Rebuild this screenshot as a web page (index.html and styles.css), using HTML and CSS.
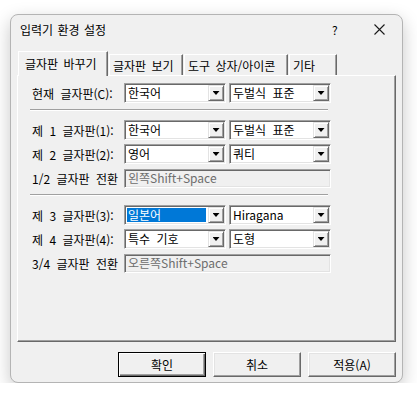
FILE: index.html
```html
<!DOCTYPE html>
<html lang="ko">
<head>
    <meta charset="UTF-8">
    <meta name="viewport" content="width=device-width, initial-scale=1.0">
    <title>입력기 환경 설정</title>
    <link rel="stylesheet" href="styles.css">
</head>
<body>

<div class="window">
    <div class="titlebar">
        <span class="title">입력기 환경 설정</span>
        <span class="help">?</span>
        <span class="close">
            <svg width="11" height="11" viewBox="0 0 11 11"><path d="M0.5 0.5 L10.5 10.5 M10.5 0.5 L0.5 10.5" stroke="#1a1a1a" stroke-width="1.1" fill="none"/></svg>
        </span>
    </div>

    <div class="tabs">
        <div class="tab tab-switch active">글자판 바꾸기</div>
        <div class="tab tab-view">글자판 보기</div>
        <div class="tab tab-tools">도구 상자/아이콘</div>
        <div class="tab tab-etc">기타</div>
    </div>

    <div class="panel">
        <div class="row">
            <span class="label">현재 글자판(C):</span>
            <div class="combo"><span class="value">한국어</span><span class="drop"><i></i></span></div>
            <div class="combo"><span class="value">두벌식 표준</span><span class="drop"><i></i></span></div>
        </div>

        <div class="sep"></div>

        <div class="row">
            <span class="label">제 1 글자판(1):</span>
            <div class="combo"><span class="value">한국어</span><span class="drop"><i></i></span></div>
            <div class="combo"><span class="value">두벌식 표준</span><span class="drop"><i></i></span></div>
        </div>
        <div class="row">
            <span class="label">제 2 글자판(2):</span>
            <div class="combo"><span class="value">영어</span><span class="drop"><i></i></span></div>
            <div class="combo"><span class="value">쿼티</span><span class="drop"><i></i></span></div>
        </div>
        <div class="row">
            <span class="label">1/2 글자판 전환</span>
            <div class="field">왼쪽Shift+Space</div>
        </div>

        <div class="sep"></div>

        <div class="row">
            <span class="label">제 3 글자판(3):</span>
            <div class="combo"><span class="value selected">일본어</span><span class="drop"><i></i></span></div>
            <div class="combo"><span class="value">Hiragana</span><span class="drop"><i></i></span></div>
        </div>
        <div class="row">
            <span class="label">제 4 글자판(4):</span>
            <div class="combo"><span class="value">특수 기호</span><span class="drop"><i></i></span></div>
            <div class="combo"><span class="value">도형</span><span class="drop"><i></i></span></div>
        </div>
        <div class="row">
            <span class="label">3/4 글자판 전환</span>
            <div class="field">오른쪽Shift+Space</div>
        </div>
    </div>

    <div class="buttons">
        <button class="btn default">확인</button>
        <button class="btn">취소</button>
        <button class="btn">적용(A)</button>
    </div>
</div>

</body>
</html>
```

FILE: styles.css
```css
body {
    margin: 0;
    background-color: #ffffff;
    font-family: "Noto Sans CJK KR", "Noto Sans", sans-serif;
    font-size: 12px;
    color: #000;
}
.window {
    margin: 14px 0 0 10px;
    width: 393px;
    height: 369px;
    box-sizing: border-box;
    border: 1px solid #b4b4b4;
    border-radius: 8px;
    background-color: #f0f0f0;
    box-shadow: 0 6px 18px rgba(0, 0, 0, 0.22);
    padding: 0 6px 5px 6px;
    display: flex;
    flex-direction: column;
}
.titlebar {
    height: 29px;
    display: flex;
    align-items: center;
    padding-left: 3px;
}
.title {
    flex: 1;
    font-size: 12px;
    word-spacing: 1px;
}
.help {
    width: 20px;
    font-size: 12px;
    margin-right: 22px;
}
.close {
    display: flex;
    margin-right: 11px;
}
.tabs {
    margin-top: 8px;
    height: 23px;
    display: flex;
    align-items: flex-end;
    padding-left: 1px;
    word-spacing: 2px;
}
.tab {
    box-sizing: border-box;
    height: 21px;
    border-top: 1px solid #fff;
    border-left: 1px solid #fff;
    border-right: 1px solid #696969;
    box-shadow: inset -1px 0 0 #a0a0a0;
    padding: 3px 0 0 3px;
    line-height: 15px;
    background-color: #f0f0f0;
    white-space: nowrap;
}
.tab.active {
    height: 25px;
    margin-bottom: -1px;
    position: relative;
    z-index: 1;
    padding: 4px 0 0 6px;
}
.tab-switch { width: 90px; }
.tab-view { width: 74px; margin-left: 1px; }
.tab-tools { width: 104px; margin-left: 1px; }
.tab-etc { width: 48px; margin-left: 1px; }
.panel {
    height: 267px;
    box-sizing: border-box;
    border-top: 1px solid #fff;
    border-left: 1px solid #fff;
    border-right: 1px solid #696969;
    border-bottom: 1px solid #696969;
    box-shadow: inset -1px -1px 0 #a0a0a0;
    padding: 7px 0 0 12px;
    word-spacing: 3px;
}
.row {
    display: flex;
    align-items: center;
    gap: 3px;
    height: 20px;
    margin-bottom: 4px;
}
.label {
    width: 89px;
    padding-left: 2px;
    white-space: nowrap;
}
.combo {
    width: 102px;
    height: 20px;
    box-sizing: border-box;
    border: 1px solid;
    border-color: #a0a0a0 #fff #fff #a0a0a0;
    box-shadow: inset 1px 1px 0 #696969, inset -1px -1px 0 #e3e3e3;
    padding: 1px;
    background-color: #fff;
    display: flex;
}
.value {
    flex: 1;
    line-height: 16px;
    padding-left: 2px;
    white-space: nowrap;
}
.value.selected {
    margin: 1px 2px 1px 1px;
    line-height: 14px;
    padding-left: 1px;
    background-color: #0078d7;
    color: #fff;
}
.drop {
    width: 16px;
    height: 16px;
    box-sizing: border-box;
    background-color: #f0f0f0;
    border: 1px solid;
    border-color: #e3e3e3 #696969 #696969 #e3e3e3;
    box-shadow: inset 1px 1px 0 #fff, inset -1px -1px 0 #a0a0a0;
    display: flex;
    align-items: center;
    justify-content: center;
}
.drop i {
    width: 7px;
    height: 4px;
    background-color: #000;
    clip-path: polygon(0 0, 100% 0, 50% 100%);
}
.field {
    width: 207px;
    height: 19px;
    box-sizing: border-box;
    border: 1px solid;
    border-color: #a0a0a0 #fff #fff #a0a0a0;
    box-shadow: inset 1px 1px 0 #696969, inset -1px -1px 0 #e3e3e3;
    padding: 0 0 0 3px;
    line-height: 16px;
    color: #6d6d6d;
    background-color: #f0f0f0;
}
.sep {
    width: 298px;
    height: 0;
    border-top: 1px solid #a0a0a0;
    border-bottom: 1px solid #fff;
    margin: 6px 0 9px;
}
.buttons {
    display: flex;
    justify-content: flex-end;
    gap: 7px;
    margin-top: 10px;
}
.btn {
    width: 88px;
    height: 25px;
    box-sizing: border-box;
    font-family: "Noto Sans CJK KR", "Noto Sans", sans-serif;
    font-size: 12px;
    color: #000;
    background-color: #f0f0f0;
    border: 1px solid;
    border-color: #fff #696969 #696969 #fff;
    box-shadow: inset -1px -1px 0 #a0a0a0, inset 1px 1px 0 #e3e3e3;
    padding: 0;
}
.btn.default {
    border: 1px solid #000;
    box-shadow: inset 1px 1px 0 #fff, inset -1px -1px 0 #696969, inset -2px -2px 0 #a0a0a0;
}
```
